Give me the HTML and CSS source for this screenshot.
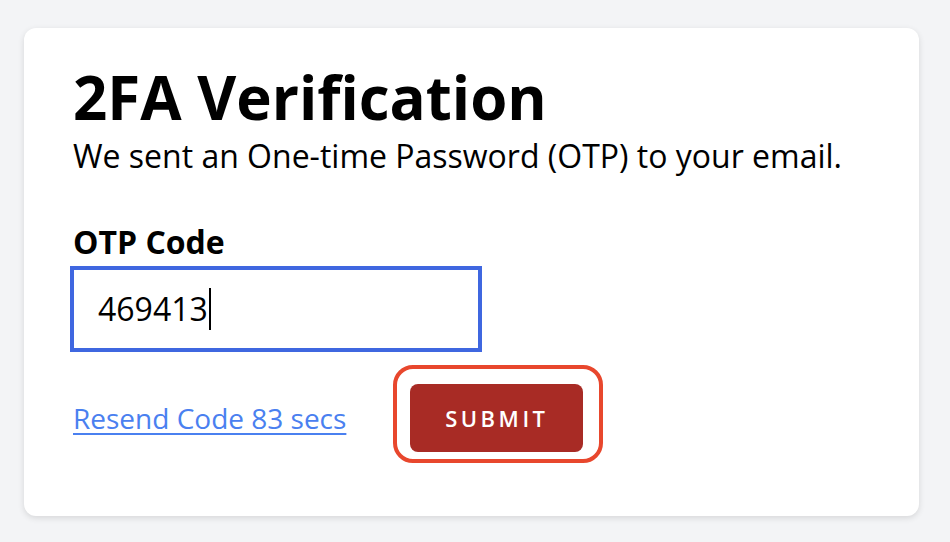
FILE: index.html
```html
<!DOCTYPE html>
<html lang="en">
<head>
  <meta charset="UTF-8" />
  <meta name="viewport" content="width=device-width, initial-scale=1" />
  <title>2FA Verification</title>
  <link rel="stylesheet" href="styles.css">
</head>
<body>
<main class="card">
  <h1>2FA Verification</h1>
  <p class="lead">We sent an One-time Password (OTP) to your email.</p>

  <form class="otp-form" onsubmit="return false;">
    <label for="otp">OTP Code</label>
    <div class="input-box" id="otp">
      <span class="input-value">469413</span><span class="caret"></span>
    </div>

    <div class="actions">
      <a href="#" class="resend">Resend Code 83 secs</a>
      <span class="btn-wrap">
        <button type="submit" class="submit-btn">Submit</button>
      </span>
    </div>
  </form>
</main>
</body>
</html>
```

FILE: styles.css
```css
:root {
  --page-bg: #f3f4f6;
  --card-bg: #ffffff;
  --text-main: #000000;
  --link: #4a80f0;
  --input-border: #3f67e0;
  --button-bg: #a82b25;
  --ring: #e8472d;
}

body {
  margin: 0;
  font-family: 'Open Sans', 'Noto Sans', sans-serif;
  background: var(--page-bg);
  color: var(--text-main);
  padding: 28px 31px 26px 24px;
}

.card {
  box-sizing: border-box;
  height: 488px;
  background: var(--card-bg);
  border-radius: 12px;
  box-shadow: 0 2px 6px rgba(0, 0, 0, 0.12);
  padding: 35px 48px 0 49px;
}

h1 {
  margin: 0;
  font-size: 60px;
  font-weight: 700;
  line-height: 69px;
}

.lead {
  margin: 0;
  font-size: 32px;
  line-height: 48px;
}

.otp-form label {
  display: block;
  margin-top: 38px;
  font-size: 32px;
  font-weight: 700;
  line-height: 48px;
}

.input-box {
  box-sizing: border-box;
  width: 412px;
  height: 86px;
  margin-left: -3px;
  border: 4px solid var(--input-border);
  display: flex;
  align-items: center;
  padding-left: 24px;
  font-size: 32px;
  line-height: 48px;
}

.caret {
  display: inline-block;
  width: 2px;
  height: 42px;
  background: #000;
  margin-left: 1px;
}

.actions {
  display: flex;
  align-items: center;
  margin-top: 32px;
}

.resend {
  color: var(--link);
  font-size: 28px;
  line-height: 40px;
  text-decoration: underline;
  text-underline-offset: 4px;
  text-decoration-thickness: 2px;
}

.btn-wrap {
  position: relative;
  display: flex;
  margin-left: 64px;
}

/* focus ring */
.btn-wrap::after {
  content: "";
  position: absolute;
  left: -17px;
  right: -20px;
  top: -19px;
  bottom: -11px;
  border: 4px solid var(--ring);
  border-radius: 20px;
  pointer-events: none;
}

.submit-btn {
  width: 173px;
  height: 68px;
  background: var(--button-bg);
  color: #fff;
  border: none;
  border-radius: 8px;
  font-family: inherit;
  font-size: 22px;
  font-weight: 600;
  letter-spacing: 3.5px;
  text-transform: uppercase;
  cursor: pointer;
}
```
